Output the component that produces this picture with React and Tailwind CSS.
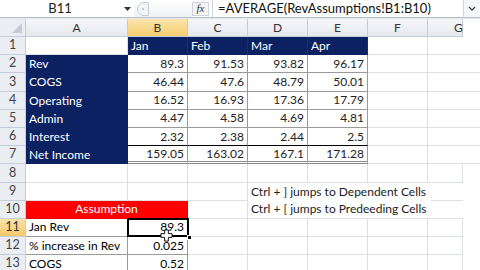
import { useState } from 'react'

const W = ['w-[26px]', 'w-[102px]', 'w-[60px]', 'w-[60px]', 'w-[60px]', 'w-[60px]', 'w-[60px]', 'w-[35px]']
const NAVY = 'bg-[#0c2161] text-white'
const grid = 'border-r border-b border-[#dcdfe3]'
const tbl = 'border-r border-b border-[#9a9a9a]'

function Cell({ w, cls = grid, right, children }) {
  return (
    <div className={`${w} shrink-0 h-full flex items-center overflow-visible whitespace-nowrap px-[3px] ${right ? 'justify-end' : ''} ${cls}`}>
      {children}
    </div>
  )
}

function RowNum({ n, active }) {
  return (
    <div
      className={`w-[26px] shrink-0 h-full flex items-center justify-center text-[12.5px] border-r border-b border-[#c3ccd8] ${
        active ? 'bg-gradient-to-b from-[#fbe3a8] to-[#f3c968] text-[#333]' : 'bg-[#eaedf1] text-[#444]'
      }`}
    >
      {n}
    </div>
  )
}

function Row({ n, active, children }) {
  return (
    <div className="flex h-[18.2px] shrink-0">
      <RowNum n={n} active={active} />
      {children}
    </div>
  )
}

const data = [
  ['Rev', '89.3', '91.53', '93.82', '96.17'],
  ['COGS', '46.44', '47.6', '48.79', '50.01'],
  ['Operating', '16.52', '16.93', '17.36', '17.79'],
  ['Admin', '4.47', '4.58', '4.69', '4.81'],
  ['Interest', '2.32', '2.38', '2.44', '2.5'],
]

function Blank() {
  return (
    <>
      <Cell w={W[5]} />
      <Cell w={W[6]} />
      <Cell w={W[7]} />
    </>
  )
}

export default function App() {
  const [cell] = useState('B11')

  return (
    <div className="w-[480px] h-[270px] overflow-hidden bg-white font-['Lato',sans-serif] text-black flex flex-col">
      {/* formula bar */}
      <div className="h-[18px] shrink-0 flex items-center border-b border-[#b9c1cc] bg-white">
        <div className="w-[120px] text-center text-[13px] text-[#222]">{cell}</div>
        <div className="w-[14px] flex justify-center">
          <svg width="7" height="4" viewBox="0 0 7 4"><path d="M0 0h7L3.5 4z" fill="#333" /></svg>
        </div>
        <div className="w-[58px] h-full flex items-center bg-gradient-to-b from-white to-[#eef0f3]">
          <div className="ml-[3px] w-[12px] h-[14px] rounded-l-full border border-[#c9ced6] bg-[#f4f5f7] flex items-center justify-center">
            <div className="w-[2px] h-[2px] bg-[#bbb] rounded-full" />
          </div>
        </div>
        <div className="w-[17px] h-[14px] border border-[#cfd4db] bg-[#f3f4f6] flex items-center justify-center">
          <span className="font-['Liberation_Serif',serif] italic text-[11px] leading-none text-[#333]">fx</span>
        </div>
        <div className="w-px h-full bg-[#cfd4db] ml-[3px]" />
        <div className="flex-1 pl-[5px] text-[13px] text-[#111] whitespace-nowrap">=AVERAGE(RevAssumptions!B1:B10)</div>
        <div className="w-[17px] h-full border-l border-[#cfd4db] bg-[#f4f6f9] flex items-center justify-center">
          <svg width="8" height="5" viewBox="0 0 8 5"><path d="M1 1l3 3 3-3" stroke="#444" strokeWidth="1.3" fill="none" /></svg>
        </div>
      </div>
      <div className="h-px shrink-0 bg-[#e3e6ea]" />

      <div className="flex flex-1 min-h-0">
        {/* sheet */}
        <div className="relative flex-1 flex flex-col text-[12px]">
          {/* column headers */}
          <div className="flex h-[18px] shrink-0 text-[12px] text-[#333]">
            <div className="w-[26px] h-full relative bg-[#eaedf1] border-r border-b border-[#c3ccd8]">
              <svg className="absolute right-[3px] bottom-[3px]" width="10" height="10" viewBox="0 0 10 10"><path d="M10 0v10H0z" fill="#c7ccd3" /></svg>
            </div>
            {['A', 'B', 'C', 'D', 'E', 'F', 'G'].map((c, i) => (
              <div
                key={c}
                className={`${W[i + 1]} h-full flex items-center justify-center border-r border-b border-[#c3ccd8] ${
                  c === 'B' ? 'bg-gradient-to-b from-[#fbe4ab] to-[#f5cd6e]' : 'bg-gradient-to-b from-[#f6f7f9] to-[#e4e8ed]'
                } ${c === 'G' ? 'justify-start pl-[26px]' : ''}`}
              >
                {c}
              </div>
            ))}
          </div>

          <Row n="1">
            <Cell w={W[1]} />
            {['Jan', 'Feb', 'Mar', 'Apr'].map((m) => (
              <Cell key={m} w={W[2]} cls={`${NAVY} border-r border-[#1a2f6c]`}>{m}</Cell>
            ))}
            <Blank />
          </Row>

          {data.map((r, i) => (
            <Row key={r[0]} n={i + 2}>
              <Cell w={W[1]} cls={`${NAVY} border-r border-[#0c2161]`}>{r[0]}</Cell>
              {r.slice(1).map((v, j) => (
                <Cell key={j} w={W[2]} right cls={`${tbl} ${i === 4 ? 'border-b-black' : ''} text-[#222]`}>{v}</Cell>
              ))}
              <Blank />
            </Row>
          ))}

          <Row n="7">
            <Cell w={W[1]} cls={`${NAVY} border-r border-[#0c2161]`}>Net Income</Cell>
            {['159.05', '163.02', '167.1', '171.28'].map((v) => (
              <Cell key={v} w={W[2]} right cls="border-r border-[#9a9a9a] border-b-[3px] border-b-[#8a8a8a] border-double text-[#222]">{v}</Cell>
            ))}
            <Blank />
          </Row>

          <Row n="8">
            {W.slice(1).map((w, i) => <Cell key={i} w={w} />)}
          </Row>

          <Row n="9">
            <Cell w={W[1]} />
            <Cell w={W[2]} />
            <Cell w={W[3]} />
            <div className="w-[183px] shrink-0 h-full flex items-center px-[3px] bg-white whitespace-nowrap text-[#222]">
              Ctrl + ] jumps to Dependent Cells
            </div>
            <div className="w-[32px] shrink-0 h-full border-b border-[#dcdfe3]" />
          </Row>

          <Row n="10">
            <div className="w-[162px] shrink-0 h-full flex items-center justify-center bg-[#ff0000] text-white border-r border-b border-[#e00000]">
              Assumption
            </div>
            <Cell w={W[3]} />
            <div className="w-[183px] shrink-0 h-full flex items-center px-[3px] bg-white whitespace-nowrap text-[#222] border-b border-[#dcdfe3]">
              Ctrl + [ jumps to Predeeding Cells
            </div>
            <div className="w-[32px] shrink-0 h-full border-b border-[#dcdfe3]" />
          </Row>

          <Row n="11" active>
            <Cell w={W[1]} cls={`${tbl}`}>Jan Rev</Cell>
            <div className="w-[60px] shrink-0 h-full relative flex items-center justify-end px-[4px] border-b border-[#9a9a9a]">
              89.3
              <div className="absolute -left-px -top-px -right-px -bottom-px border-2 border-black" />
              <div className="absolute right-[-4px] bottom-[-4px] w-[5px] h-[5px] bg-black border border-white" />
            </div>
            {W.slice(3).map((w, i) => <Cell key={i} w={w} />)}
          </Row>

          <Row n="12">
            <Cell w={W[1]} cls={tbl}>% increase in Rev</Cell>
            <Cell w={W[2]} right cls={tbl}>0.025</Cell>
            {W.slice(3).map((w, i) => <Cell key={i} w={w} />)}
          </Row>

          <Row n="13">
            <Cell w={W[1]} cls={tbl}>COGS</Cell>
            <Cell w={W[2]} right cls={tbl}>0.52</Cell>
            {W.slice(3).map((w, i) => <Cell key={i} w={w} />)}
          </Row>

          {/* mouse cursor */}
          <svg className="absolute left-[160px] top-[210px]" width="13" height="13" viewBox="0 0 14 14">
            <path d="M5 1h4v4h4v4H9v4H5V9H1V5h4z" fill="#fff" stroke="#000" strokeWidth="1" />
          </svg>
        </div>

        {/* vertical scrollbar */}
        <div className="w-[17px] shrink-0 flex flex-col bg-[#dfe3ea] border-l border-[#c4cad3] border-r-2 border-r-[#7d8694]">
          <div className="h-[4px] mx-[1px] mt-[1px] border border-[#9aa4b3] bg-[#eef1f5]" />
          <div className="h-[13px] flex items-center justify-center">
            <svg width="7" height="4" viewBox="0 0 7 4"><path d="M3.5 0L7 4H0z" fill="#444" /></svg>
          </div>
          <div className="h-[168px] mx-[1px] rounded-[2px] border border-[#9aa4b3] bg-gradient-to-r from-[#f2f4f9] to-[#dde3ee] flex items-center justify-center">
            <div className="flex flex-col gap-[1px]">
              <div className="w-[6px] h-px bg-[#8a94a3]" />
              <div className="w-[6px] h-px bg-[#8a94a3]" />
              <div className="w-[6px] h-px bg-[#8a94a3]" />
            </div>
          </div>
        </div>
      </div>
    </div>
  )
}
